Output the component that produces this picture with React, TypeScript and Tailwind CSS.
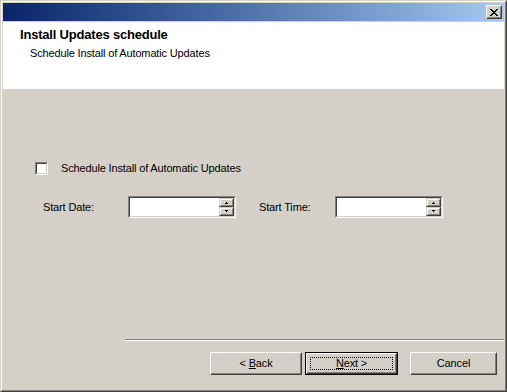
import React from 'react';

// classic win2k bevels
const raised = 'border border-t-white border-l-white border-r-[#404040] border-b-[#404040]';
const raisedInner = 'border border-t-[#d4d0c8] border-l-[#d4d0c8] border-r-[#808080] border-b-[#808080]';
const sunken = 'border border-t-[#808080] border-l-[#808080] border-r-white border-b-white';
const sunkenInner = 'border border-t-[#404040] border-l-[#404040] border-r-[#d4d0c8] border-b-[#d4d0c8]';

function CloseGlyph() {
  const rows = [
    [0, 1, 6, 7],
    [1, 2, 5, 6],
    [2, 3, 4, 5],
    [3, 4],
    [2, 3, 4, 5],
    [1, 2, 5, 6],
    [0, 1, 6, 7],
  ];
  return (
    <svg width="8" height="7" viewBox="0 0 8 7" shapeRendering="crispEdges">
      {rows.map((cols, y) =>
        cols.map((x) => <rect key={`${x}-${y}`} x={x} y={y} width="1" height="1" fill="#000" />)
      )}
    </svg>
  );
}

function SpinHalf({ up }: { up: boolean }) {
  return (
    <div className="w-[15px] h-[9px] border border-t-[#d4d0c8] border-l-[#d4d0c8] border-r-[#404040] border-b-[#404040] bg-[#d4d0c8]">
      <div className="w-full h-full border border-t-white border-l-white border-r-[#808080] border-b-[#808080] flex items-center justify-center">
        <svg width="5" height="3" viewBox="0 0 5 3" shapeRendering="crispEdges">
          {up ? (
            <>
              <rect x="2" y="1" width="1" height="1" fill="#000" />
              <rect x="1" y="2" width="3" height="1" fill="#000" />
            </>
          ) : (
            <>
              <rect x="1" y="0" width="3" height="1" fill="#000" />
              <rect x="2" y="1" width="1" height="1" fill="#000" />
            </>
          )}
        </svg>
      </div>
    </div>
  );
}

function SpinInput() {
  return (
    <div className={`w-[108px] h-[22px] ${sunken}`}>
      <div className={`w-full h-full ${sunkenInner} bg-white flex justify-end`}>
        <div className="flex flex-col">
          <SpinHalf up />
          <SpinHalf up={false} />
        </div>
      </div>
    </div>
  );
}

function Button({ children, width, isDefault }: { children: React.ReactNode; width: string; isDefault?: boolean }) {
  if (isDefault) {
    return (
      <div className={`${width} h-[23px] border border-black bg-[#d4d0c8]`}>
        <div className={`w-full h-full ${raised}`}>
          <div className={`w-full h-full ${raisedInner} p-[2px]`}>
            <div className="w-full h-full border border-dotted border-black flex items-center justify-center">
              {children}
            </div>
          </div>
        </div>
      </div>
    );
  }
  return (
    <div className={`${width} h-[23px] ${raised} bg-[#d4d0c8]`}>
      <div className={`w-full h-full ${raisedInner} flex items-center justify-center`}>{children}</div>
    </div>
  );
}

export default function App() {
  return (
    <div className="w-[507px] h-[392px] bg-[#d4d0c8] border border-t-[#d4d0c8] border-l-[#d4d0c8] border-r-[#404040] border-b-[#404040] font-['Liberation_Sans',Arial,sans-serif] text-[11px] leading-[13px] tracking-[-0.15px] text-black">
      <div className="w-full h-full flex flex-col border border-t-white border-l-white border-r-[#808080] border-b-[#808080] p-px">
        {/* title bar */}
        <div className="h-[18px] shrink-0 bg-gradient-to-r from-[#0a246a] to-[#a6caf0] flex items-start justify-end pr-[2px] pt-[2px]">
          <div className={`w-[16px] h-[14px] ${raised} bg-[#d4d0c8]`}>
            <div className={`w-full h-full ${raisedInner} flex items-center justify-center`}>
              <CloseGlyph />
            </div>
          </div>
        </div>

        {/* header */}
        <div className="mt-px h-[67px] shrink-0 bg-white pl-[17px] pt-[5px]">
          <div className="text-[13px] leading-[15px] font-bold tracking-[-0.2px]">Install Updates schedule</div>
          <div className="mt-[5px] ml-[10px]">Schedule Install of Automatic Updates</div>
        </div>

        {/* body */}
        <div className="flex-1 flex flex-col">
          <div className="flex-1 pt-[73px]">
            <div className="flex items-center pl-[32px]">
              <div className={`w-[13px] h-[13px] ${sunken}`}>
                <div className={`w-full h-full ${sunkenInner} bg-white`} />
              </div>
              <span className="ml-[13px]">Schedule Install of Automatic Updates</span>
            </div>

            <div className="flex items-center mt-[21px] pl-[40px]">
              <span className="w-[85px]">Start Date:</span>
              <SpinInput />
              <span className="ml-[23px] w-[76px]">Start Time:</span>
              <SpinInput />
            </div>
          </div>

          <div className="ml-[122px] border-t border-t-[#808080] border-b border-b-white" />

          <div className="mt-[11px] mb-[14px] flex justify-end pr-[7px]">
            <Button width="w-[92px]">
              <span>
                &lt; <span className="underline">B</span>ack
              </span>
            </Button>
            <div className="ml-[3px]">
              <Button width="w-[93px]" isDefault>
                <span>
                  <span className="underline">N</span>ext &gt;
                </span>
              </Button>
            </div>
            <div className="ml-[12px]">
              <Button width="w-[87px]">Cancel</Button>
            </div>
          </div>
        </div>
      </div>
    </div>
  );
}
